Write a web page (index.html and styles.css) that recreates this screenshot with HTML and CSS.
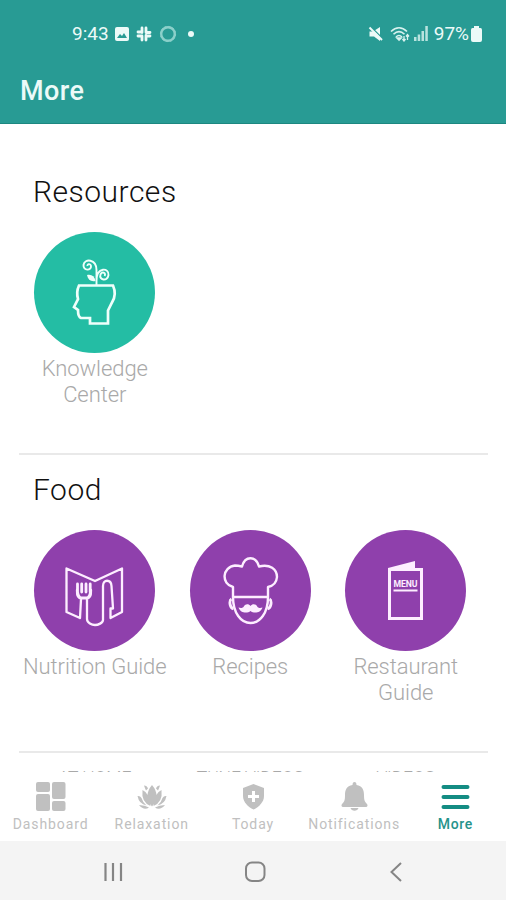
FILE: index.html
```html
<!DOCTYPE html>
<html lang="en">
<head>
    <meta charset="UTF-8">
    <meta name="viewport" content="width=device-width, initial-scale=1.0">
    <title>More</title>
    <link rel="stylesheet" href="styles.css">
</head>
<body>
    <header class="header">
        <div class="status-bar">
            <div class="status-left">
                <span class="time">9:43</span>
                <svg width="14" height="14" viewBox="0 0 14 14"><rect width="14" height="14" rx="2" fill="#ecfaf8"/><path d="M2 11l3-4 2 2 2-3 3 5z" fill="#289b94"/></svg>
                <svg width="16" height="16" viewBox="0 0 16 16" fill="none" stroke="#ecfaf8" stroke-width="2.800" stroke-linecap="round"><path d="M6 2v4.500M2 6h4M10 2v4M10 6.500h4M2 10h4M6 10v4M10 9.500v4.500M10 10h4"/></svg>
                <svg width="18" height="18" viewBox="0 0 18 18" fill="none" stroke="#8bd0ca"><circle cx="9" cy="9" r="6.800" stroke-width="2.400"/><circle cx="9" cy="9" r="7.600" stroke-width="1" stroke-dasharray="2 2"/></svg>
                <span class="dot"></span>
            </div>
            <div class="status-right">
                <svg width="16" height="16" viewBox="0 0 16 16" fill="#ecfaf8"><path d="M1.500 5.500H5L12 1v14l-6-4.500H1.500z"/><path d="M2.500 .500l12 12" stroke="#289b94" stroke-width="1.500"/><path d="M1.500 1.500l12.500 12.500" stroke="#ecfaf8" stroke-width="2"/></svg>
                <svg class="wifi" width="20" height="16" viewBox="0 0 20 16" fill="none" stroke="#d8f2ef" stroke-width="1.600"><path d="M1 5.500c5-5 11-5 16 0M3.500 8.300c3.500-3.500 7.500-3.500 11 0M6 11c2-2 4-2 6 0"/><path d="M9 14l-2-2h4z" fill="#d8f2ef"/><path d="M14 10v5M17.500 14V9M12.500 13l1.500 2 1.500-2M16 10.500l1.500-2 1.500 2" stroke-width="1.300"/></svg>
                <svg class="signal" width="14" height="15" viewBox="0 0 14 15" fill="#b9e3df"><path d="M0 11h2.500v4H0zM3.700 8.500h2.500V15H3.700zM7.500 5H10v10H7.500zM11.300 0h2.500v15h-2.500z"/></svg>
                <span class="percent">97%</span>
                <svg class="battery" width="11" height="16" viewBox="0 0 11 16" fill="#ecfaf8"><path d="M3 0h5v2h1.500Q11 2 11 4v10q0 2-2 2H2q-2 0-2-2V4q0-2 1.500-2H3z"/></svg>
            </div>
        </div>
        <h1>More</h1>
    </header>

    <main class="content">
        <section class="section">
            <h2>Resources</h2>
            <div class="grid">
                <a class="item">
                    <div class="circle green">
                        <svg width="121" height="121" viewBox="0 0 121 121" fill="none" stroke="#effffb" stroke-width="2.700">
                            <path d="M45 53.500H79q4 9-1 17l-4 8v13H56V86h-9q-3-1-3-8l-4-3 4-8q-2-7 1-13.500z"/>
                            <path d="M62.500 54V38c0-11-12-12-13-5-.5 6 8 6 7.500 1-.5-3-4-2-3.500 0M62.500 49c0-15 13-13 12-6-1 7-10 5-8-.5 2-4 6-1 4 1.500" stroke-width="1.900"/>
                            <path d="M61.500 49c-1-5-4-7-8.500-6 1 5 4 7 8.500 6z" fill="#effffb" stroke="none"/>
                        </svg>
                    </div>
                    <span>Knowledge<br>Center</span>
                </a>
            </div>
        </section>

        <section class="section">
            <h2>Food</h2>
            <div class="grid">
                <a class="item">
                    <div class="circle">
                        <svg width="121" height="121" viewBox="0 0 121 121" fill="none" stroke="#fdeeff" stroke-width="2.300" stroke-linejoin="round" stroke-linecap="round">
                            <path d="M46 88l-13.500-6V38.500L61 51l27-12.500V82l-11.500 6V78.500H79L77.500 56c-.5-7-8.500-7-8.500 0v34c0 3-5 5-8 5s-8-2-8-6V69c4-2 4-4 4-9M46 88l1-19c-4-2-4-4-4-9"/>
                            <path d="M43.500 54v8M47.700 54v8M52 54v8M56.200 54v8M43.500 62q1 6 4 6h5q3 0 4-6" stroke-width="2.800"/>
                        </svg>
                    </div>
                    <span>Nutrition Guide</span>
                </a>
                <a class="item">
                    <div class="circle">
                        <svg width="121" height="121" viewBox="0 0 121 121" fill="none" stroke="#fdeeff" stroke-width="2.400" stroke-linejoin="round">
                            <path d="M43 67V57c-12-3-11-20 2-21.500 3 0 5 .500 7 1 3-11 14-11 17 0 11-3 18 3 18 10.500-.5 6-4 9-9 10v10zM43 67c0 16 8 26 17.500 26S78 83 78 67"/>
                            <path d="M41.500 69q-2 1-1.500 5t3.500 5M79.500 69q2 1 1.500 5t-3.500 5" stroke-width="2.800"/>
                            <path d="M60.500 76c2-3 6-2 7 1 2 1.500 3 1 5 .500-2 6-9 6-12 3.500-3 2.500-10 2.500-12-3.500 2 .500 3 1 5-.500 1-3 5-4 7-1z" fill="#fdeeff" stroke="none"/>
                        </svg>
                    </div>
                    <span>Recipes</span>
                </a>
                <a class="item">
                    <div class="circle">
                        <svg width="121" height="121" viewBox="0 0 121 121" fill="none" stroke="#fdeeff">
                            <path d="M44.500 39.500h32v49h-32z" stroke-width="3"/>
                            <path d="M43 38l27-7v8H43z" fill="#fdeeff" stroke="none"/>
                            <path d="M48.500 60.500h24" stroke-width="2"/>
                            <text class="menu-text" x="60.500" y="56.500" text-anchor="middle" textLength="24" lengthAdjust="spacingAndGlyphs">MENU</text>
                        </svg>
                    </div>
                    <span>Restaurant<br>Guide</span>
                </a>
            </div>
        </section>

        <section class="section next">
            <div class="grid">
                <a class="item"><span>At Home</span></a>
                <a class="item"><span>Tune Videos</span></a>
                <a class="item"><span>Videos</span></a>
            </div>
        </section>
    </main>

    <nav class="tabs">
        <a class="tab">
            <svg width="30" height="30" viewBox="0 0 30 30" fill="#c0c0c0"><rect y="1" width="14" height="10" rx="2"/><rect x="16" y="1" width="13.500" height="17" rx="2"/><rect y="13" width="14" height="17" rx="2"/><rect x="16" y="20" width="13.500" height="10" rx="2"/></svg>
            <span>Dashboard</span>
        </a>
        <a class="tab">
            <svg width="30" height="30" viewBox="0 0 30 30" fill="#c0c0c0"><path d="M15 4q9 10.500 0 21.500-9-11 0-21.500zM5.500 9q7 3 8 16Q4 21 5.500 9zM24.500 9q1.500 12-8 16 1-13 8-16zM.500 15q2.500-.5 4 2 1 4 5 7.500Q2 23 .500 15zM29.500 15q-2.500-.5-4 2-1 4-5 7.500Q28 23 29.500 15zM2 24q6 0 10 2.500-5 3.500-10-2.500zM28 24q-6 0-10 2.500 5 3.500 10-2.500zM7 4.500q3 0 4 3l-2 2q-1-2-2-5zM23 4.500q-3 0-4 3l2 2q1-2 2-5z"/></svg>
            <span>Relaxation</span>
        </a>
        <a class="tab">
            <svg width="30" height="30" viewBox="0 0 30 30"><path d="M15.500 3l10.500 4v8c0 6-5 11-10.500 13.500C10 26 5 21 5 15V7z" fill="#c0c0c0"/><path d="M15.500 10v11M10 15.500h11" stroke="#fff" stroke-width="3"/></svg>
            <span>Today</span>
        </a>
        <a class="tab">
            <svg width="30" height="30" viewBox="0 0 30 30" fill="#c0c0c0"><path d="M15.500 1q2 0 2 3c6 1 7.500 5 7.500 10 0 6 1 7 3 9 1 1 .5 3-1 3H4c-1.500 0-2-2-1-3 2-2 3-3 3-9 0-5 1.500-9 7.500-10q0-3 2-3zM11.500 27h8q-1 2.800-4 2.800t-4-2.800z"/></svg>
            <span>Notifications</span>
        </a>
        <a class="tab active">
            <svg width="30" height="30" viewBox="0 0 30 30" stroke="#148c83" stroke-width="4" stroke-linecap="round"><path d="M3.500 6h24M3.500 16h24M3.500 26h24"/></svg>
            <span>More</span>
        </a>
    </nav>

    <footer class="system-nav">
        <svg width="20" height="20" viewBox="0 0 20 20" stroke="#858585" stroke-width="2.200"><path d="M2.500 1v18M10 1v18M18 1v18"/></svg>
        <svg width="22" height="22" viewBox="0 0 22 22" fill="none" stroke="#858585" stroke-width="2"><rect x="1" y="1.500" width="18.500" height="18.500" rx="6"/></svg>
        <svg width="14" height="20" viewBox="0 0 14 20" fill="none" stroke="#858585" stroke-width="2"><path d="M12 1L2.500 10l9.500 9"/></svg>
    </footer>
</body>
</html>
```
FILE: styles.css
```css
* {
    margin: 0;
    padding: 0;
    box-sizing: border-box;
}

body {
    width: 506px;
    height: 900px;
    display: flex;
    flex-direction: column;
    overflow: hidden;
    background: #fff;
    font-family: Roboto, sans-serif;
}

svg {
    display: block;
    flex-shrink: 0;
}

.header {
    flex: 0 0 124px;
    background: #289b94;
    border-bottom: 1px solid #1c8780;
    color: #ecfaf8;
}

.status-bar {
    display: flex;
    justify-content: space-between;
    height: 67px;
    padding: 0 24px 0 72px;
    font-size: 19px;
}

.status-left,
.status-right {
    display: flex;
    align-items: center;
}

.status-left {
    gap: 6.8px;
}

.dot {
    width: 6px;
    height: 6px;
    margin-left: 4px;
    border-radius: 50%;
    background: #ecfaf8;
}

.wifi {
    margin-left: 6px;
}

.signal {
    margin-left: 4px;
}

.percent {
    margin-left: 6px;
}

.battery {
    margin-left: 2px;
}

.header h1 {
    padding-left: 20px;
    font-size: 27px;
    font-weight: 500;
    line-height: 48px;
    letter-spacing: 0.4px;
}

.content {
    flex: 1;
    min-height: 0;
    padding: 33px 18px 0 19px;
    overflow: hidden;
}

.section {
    height: 298px;
    padding-top: 15px;
    border-bottom: 2px solid #e9e9e9;
}

.section h2 {
    height: 60px;
    padding-left: 14px;
    color: #111;
    font-size: 30px;
    font-weight: 300;
    line-height: 40px;
    letter-spacing: 0.5px;
}

.grid {
    display: grid;
    grid-template-columns: repeat(3, 155.5px);
    margin-left: -2px;
}

.item {
    text-align: center;
    color: #a9a9a9;
    font-size: 22px;
    font-weight: 300;
    line-height: 26px;
    letter-spacing: -0.07px;
    white-space: nowrap;
}

.circle {
    width: 121px;
    height: 121px;
    margin: 0 auto 3px;
    border-radius: 50%;
    background: #8f40ac;
}

.circle.green {
    background: #24bda4;
}

.menu-text {
    fill: #fdeeff;
    stroke: none;
    font-size: 9px;
    font-weight: 700;
}

.section.next {
    padding-top: 12px;
    border: none;
}

.next .item {
    font-size: 17.5px;
    text-transform: uppercase;
}

.tabs {
    flex: 0 0 69px;
    display: grid;
    grid-template-columns: repeat(5, 1fr);
    background: #fff;
}

.tab {
    display: flex;
    flex-direction: column;
    align-items: center;
    padding-top: 9px;
    color: #c0c0c0;
    font-size: 14px;
    line-height: 20px;
    letter-spacing: 0.9px;
}

.tab span {
    margin-top: 3px;
}

.tab.active {
    color: #26938b;
    font-weight: 500;
    letter-spacing: 0.7px;
}

.system-nav {
    flex: 0 0 59px;
    display: flex;
    align-items: center;
    justify-content: space-between;
    padding: 2px 103px 0 103px;
    background: #f4f4f4;
}
```
